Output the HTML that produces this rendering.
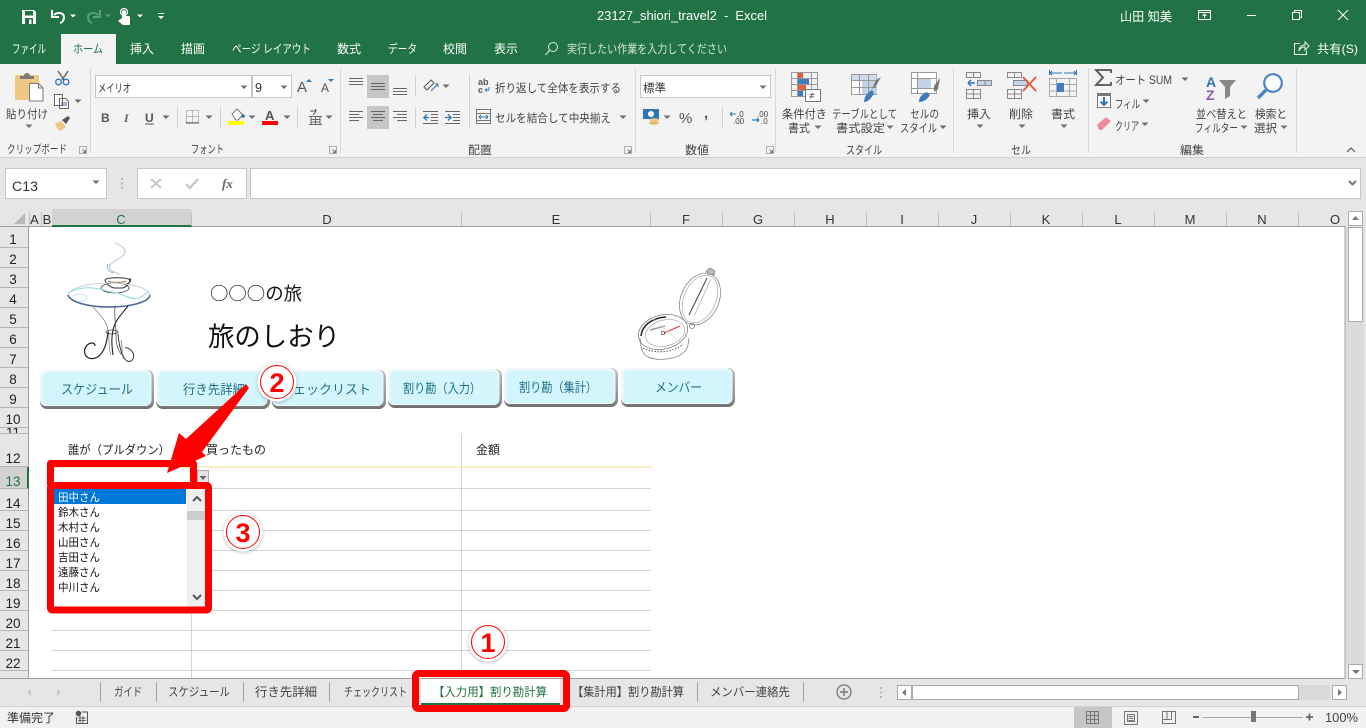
<!DOCTYPE html>
<html lang="ja"><head><meta charset="utf-8"><title>23127_shiori_travel2 - Excel</title>
<style>
html,body{margin:0;padding:0;width:1366px;height:728px;overflow:hidden;background:#e6e6e6}
svg{display:block;position:absolute;left:0;top:0}
text{font-family:"Liberation Sans","Noto Sans CJK JP",sans-serif;font-size:12px;fill:#444;white-space:pre}
.tab{fill:#fff;font-size:12px}
.r{font-size:11.5px;fill:#444}
.h{font-size:13px;fill:#333;text-anchor:middle}
.n{font-size:13.5px;fill:#222;text-anchor:middle}
.b{font-size:13px;fill:#21708a}
.s{font-size:12px;fill:#444}
.c{font-size:12px;fill:#222}
.l{font-size:11px;fill:#111}
.g{stroke:#d4d4d4;stroke-width:1;fill:none}
</style></head><body>
<svg width="1366" height="728" viewBox="0 0 1366 728" xmlns="http://www.w3.org/2000/svg">
<defs>
<path id="dd" d="M-3.5-1.5h7L0 2z" fill="#6e6e6e"/>
<path id="wd" d="M-3-1.5h6L0 1.5z" fill="#fff"/>
<g id="lc"><path d="M0 0h7v7H0z" fill="none" stroke="#9a9a9a" stroke-width=".8"/><path d="M3 3l3 3M6 3.5V6H3.500" fill="none" stroke="#777"/></g>
<linearGradient id="bs" x1="0" y1="0" x2="0" y2="1"><stop offset="0" stop-color="#bcbcbc"/><stop offset=".85" stop-color="#8c8c8c"/><stop offset="1" stop-color="#6d6d6d"/></linearGradient>
<g id="btn"><rect x="0" y="0" width="114" height="39" rx="7" fill="url(#bs)"/><rect x="0" y="0" width="111.500" height="36" rx="6" fill="#eef8fa"/><rect x="2.500" y="2.500" width="108" height="32.500" rx="5" fill="#d3f6fd"/></g>
<filter id="sh" x="-30%" y="-30%" width="160%" height="160%"><feGaussianBlur stdDeviation="1.5"/></filter>
</defs>

<!-- title bar -->
<rect width="1366" height="64" fill="#217346"/>
<rect x="61" y="34" width="55" height="30" fill="#f3f3f3"/>
<!-- QAT -->
<path d="M22 10h12l2 2v12H22z" fill="#fff"/><rect x="25" y="11" width="8" height="4.500" fill="#217346"/><rect x="25" y="18" width="8" height="6" fill="#217346"/><rect x="29" y="19.500" width="2.500" height="4.500" fill="#fff"/>
<path d="M54 15c3-3 10-3 10 2.500 0 3-2 5-4 5.500" fill="none" stroke="#fff" stroke-width="2"/><path d="M52 10v7h7" fill="none" stroke="#fff" stroke-width="2"/>
<use href="#wd" x="73" y="16"/>
<path d="M98 15c-3-3-10-3-10 2.500 0 3 2 5 4 5.500" fill="none" stroke="#5f9c7e" stroke-width="2"/><path d="M100 10v7h-7" fill="none" stroke="#5f9c7e" stroke-width="2"/>
<path d="M105 14.500h6l-3 3z" fill="#5f9c7e"/>
<path d="M122 18v-6c0-2.500 4-2.500 4 0v4h2c2 0 2 1 2 3v6h-7l-5-4z" fill="#fff"/><circle cx="124" cy="12" r="3.500" fill="none" stroke="#fff" stroke-width="1.200"/>
<use href="#wd" x="140" y="16"/>
<path d="M158 13h6v1h-6z" fill="#fff"/><path d="M158 16h6l-3 3z" fill="#fff"/>
<text x="597" y="20" textLength="170" lengthAdjust="spacingAndGlyphs" style="font-size:12.500px;fill:#fff">23127_shiori_travel2  -  Excel</text>
<text x="1120" y="21" textLength="52" lengthAdjust="spacingAndGlyphs" style="font-size:12.500px;fill:#fff">山田 知美</text>
<path d="M1198.500 10.500h12v9h-12zM1198.500 12.500h12M1204.500 18v-4M1202.500 16l2-2 2 2" fill="none" stroke="#fff"/>
<path d="M1247 15.500h9" stroke="#fff" fill="none"/>
<path d="M1292.500 12.500h7v7h-7zM1294.500 12.500v-2h7v7h-2" fill="none" stroke="#fff"/>
<path d="M1338 10l10 10M1348 10l-10 10" stroke="#fff" fill="none"/>
<!-- tabs -->
<text class="tab" x="12" y="53" textLength="34" lengthAdjust="spacingAndGlyphs">ファイル</text>
<text class="tab" x="73" y="53" textLength="30" lengthAdjust="spacingAndGlyphs" style="fill:#217346">ホーム</text>
<text class="tab" x="130" y="53" textLength="24" lengthAdjust="spacingAndGlyphs">挿入</text>
<text class="tab" x="181" y="53" textLength="24" lengthAdjust="spacingAndGlyphs">描画</text>
<text class="tab" x="232" y="53" textLength="79" lengthAdjust="spacingAndGlyphs">ページ レイアウト</text>
<text class="tab" x="337" y="53" textLength="24" lengthAdjust="spacingAndGlyphs">数式</text>
<text class="tab" x="388" y="53" textLength="29" lengthAdjust="spacingAndGlyphs">データ</text>
<text class="tab" x="443" y="53" textLength="24" lengthAdjust="spacingAndGlyphs">校閲</text>
<text class="tab" x="494" y="53" textLength="24" lengthAdjust="spacingAndGlyphs">表示</text>
<circle cx="553" cy="47" r="4.500" fill="none" stroke="#e3ece7"/><path d="M549.500 50.500l-4 4.500" stroke="#e3ece7" fill="none"/>
<text class="tab" x="567" y="53" textLength="160" lengthAdjust="spacingAndGlyphs" style="fill:#d5e4dc">実行したい作業を入力してください</text>
<path d="M1300 43.500h-5.500v11h12v-4M1299 51c0-4 3-6 6-6v-3l4 4-4 4v-3c-3 0-5 1-6 4z" fill="none" stroke="#e8f0ec"/>
<text class="tab" x="1317" y="53" textLength="41" lengthAdjust="spacingAndGlyphs">共有(S)</text>

<!-- ribbon -->
<rect y="64" width="1366" height="93" fill="#f3f3f3"/>
<rect y="157" width="1366" height="1" fill="#d2d2d2"/>
<g fill="#d8d8d8"><rect x="90" y="68" width="1" height="85"/><rect x="340" y="68" width="1" height="85"/><rect x="635" y="68" width="1" height="85"/><rect x="775" y="68" width="1" height="85"/><rect x="953" y="68" width="1" height="85"/><rect x="1088" y="68" width="1" height="85"/><rect x="1296" y="68" width="1" height="85"/></g>
<!-- clipboard -->
<rect x="15" y="75" width="24" height="25" rx="1" fill="#efc983"/><path d="M20 79v-3h4c0-4 6-4 6 0h4v3z" fill="#7b7b7b"/>
<path d="M29.500 83.500h9l4.500 4.500v13H29.500z" fill="#fff" stroke="#777"/><path d="M38.500 83.500v4.500H43" fill="none" stroke="#777"/>
<text class="r" x="6" y="118" textLength="42" lengthAdjust="spacingAndGlyphs">貼り付け</text><use href="#dd" x="29" y="126"/>
<path d="M58 71l6 9M68 71l-6 9" stroke="#6a6a6a" stroke-width="1.500" fill="none"/><circle cx="58.500" cy="82" r="2.800" fill="none" stroke="#2f75b5" stroke-width="1.300"/><circle cx="66" cy="82" r="2.800" fill="none" stroke="#2f75b5" stroke-width="1.300"/>
<path d="M54.500 94.500h8l0 11h-8zM59.500 98.500h6l3 3v7h-9z" fill="#fff" stroke="#666"/><path d="M61 103h6M61 105h6" stroke="#2f75b5"/>
<use href="#dd" x="78" y="101"/>
<path d="M55 124l6-3 5 6-6 4c-2-1-4-4-5-7z" fill="#efc983"/><path d="M62 120l6-4 2 2-4 6z" fill="#555"/>
<text class="r" x="7" y="153" textLength="60" lengthAdjust="spacingAndGlyphs">クリップボード</text><use href="#lc" x="79.500" y="146.500"/>
<!-- font -->
<rect x="95.500" y="75.500" width="156" height="22" fill="#fff" stroke="#c6c6c6"/>
<rect x="252.500" y="75.500" width="39" height="22" fill="#fff" stroke="#c6c6c6"/>
<text x="98" y="92" textLength="33" lengthAdjust="spacingAndGlyphs" style="font-size:11.500px;fill:#333">メイリオ</text>
<text x="255" y="92" style="font-size:12.500px;fill:#333">9</text>
<use href="#dd" x="244" y="87"/><use href="#dd" x="284" y="87"/>
<text x="297" y="92" style="font-size:15px;fill:#555">A</text><path d="M306 82h6l-3-3z" fill="#2f75b5"/>
<text x="321" y="92" style="font-size:12px;fill:#555">A</text><path d="M328 79h6l-3 3z" fill="#2f75b5"/>
<text x="101" y="122" style="font-size:12px;font-weight:bold;fill:#555">B</text>
<text x="124" y="122" style="font-size:12px;font-style:italic;font-weight:bold;fill:#666;font-family:'Liberation Serif',serif">I</text>
<text x="145" y="122" style="font-size:12px;font-weight:bold;fill:#555">U</text><rect x="145" y="123.500" width="9" height="1" fill="#555"/>
<use href="#dd" x="166" y="117"/>
<rect x="177" y="107" width="1" height="21" fill="#d0d0d0"/>
<path d="M186.500 110.500h12v12h-12zM192.500 110.500v12M186.500 116.500h12" fill="none" stroke="#888" stroke-dasharray="1 1"/><path d="M186 123h13" stroke="#555"/>
<use href="#dd" x="209" y="117"/>
<rect x="220" y="107" width="1" height="21" fill="#d0d0d0"/>
<path d="M232 114l5-5 6 6-5 5h-2z" fill="#fff" stroke="#777"/><circle cx="243" cy="116" r="1.800" fill="#2f75b5"/>
<rect x="228" y="121" width="16" height="4" fill="#ffff00"/>
<use href="#dd" x="252" y="117"/>
<text x="265" y="120" style="font-size:13px;font-weight:bold;fill:#555">A</text>
<rect x="262" y="121" width="16" height="4" fill="#ff0000"/>
<use href="#dd" x="287" y="117"/>
<rect x="297" y="107" width="1" height="21" fill="#d0d0d0"/>
<path d="M310 111h6l-3 4M316 109l-1 2" fill="none" stroke="#555"/>
<path d="M309 116.500h13M311 119.500h9M311 122h9M309 124.500h13M315.500 116v8.500M311 116.500v8M320 116.500v8" fill="none" stroke="#666"/>
<use href="#dd" x="329" y="117"/>
<text class="r" x="191" y="153" textLength="33" lengthAdjust="spacingAndGlyphs">フォント</text><use href="#lc" x="329.500" y="146.500"/>
<!-- alignment -->
<rect x="367" y="75" width="22" height="23" fill="#c6c6c6"/><rect x="367" y="106" width="22" height="23" fill="#c6c6c6"/>
<path d="M349 78.500h14M349 81.500h14M349 84.500h14M371 83.500h14M371 86.500h14M371 89.500h14M393 88.500h14M393 91.500h14M393 94.500h14" stroke="#666" fill="none"/>
<path d="M349 111.500h14M349 114.500h10M349 117.500h14M349 120.500h10M371 111.500h14M373 114.500h10M371 117.500h14M373 120.500h10M393 111.500h14M397 114.500h10M393 117.500h14M397 120.500h10" stroke="#666" fill="none"/>
<rect x="415" y="75" width="1" height="21" fill="#d0d0d0"/><rect x="415" y="107" width="1" height="21" fill="#d0d0d0"/>
<path d="M424 87l7-7 3 3-7 7z" fill="none" stroke="#555"/><path d="M431 91l7-7M438 84h-3M438 84v3" stroke="#2f75b5" fill="none"/>
<use href="#dd" x="446" y="86"/>
<path d="M423 111.500h15M431 114.500h7M431 117.500h7M431 120.500h7M423 123.500h15M445 111.500h15M445 123.500h15M453 114.500h7M453 117.500h7M453 120.500h7" stroke="#666" fill="none"/>
<path d="M429 117.500h-5l3-3M424 117.500l3 3M445 117.500h6l-3-3M451 117.500l-3 3" stroke="#2f75b5" stroke-width="1.300" fill="none"/>
<rect x="469" y="74" width="1" height="55" fill="#d0d0d0"/>
<text x="478" y="85" style="font-size:9px;font-weight:bold;fill:#555">ab</text><text x="478" y="93" style="font-size:9px;font-weight:bold;fill:#555">c</text><path d="M489 87v3h-4M485 90l2-1.500M485 90l2 1.500" stroke="#2f75b5" fill="none"/>
<text class="r" x="495" y="92" textLength="126" lengthAdjust="spacingAndGlyphs">折り返して全体を表示する</text>
<path d="M476.500 109.500h14v14h-14zM476.500 113.500h14M476.500 120.500h14" fill="none" stroke="#777"/><path d="M479 117h9M479 117l2-2M479 117l2 2M488 117l-2-2M488 117l-2 2" stroke="#2f75b5" fill="none"/>
<text class="r" x="495" y="122" textLength="116" lengthAdjust="spacingAndGlyphs">セルを結合して中央揃え</text><use href="#dd" x="623" y="117"/>
<text class="r" x="468" y="154" textLength="24" lengthAdjust="spacingAndGlyphs">配置</text><use href="#lc" x="624.500" y="146.500"/>
<!-- number -->
<rect x="640.500" y="75.500" width="130" height="22" fill="#fff" stroke="#c6c6c6"/>
<text x="643" y="92" textLength="23" lengthAdjust="spacingAndGlyphs" style="font-size:11.500px;fill:#333">標準</text><use href="#dd" x="763" y="87"/>
<rect x="643" y="109" width="16" height="10" fill="#2f75b5"/><circle cx="651" cy="114" r="3" fill="#fff"/><ellipse cx="654" cy="120" rx="5" ry="1.800" fill="#efc983"/><ellipse cx="654" cy="123" rx="5" ry="1.800" fill="#e5b66b"/><use href="#dd" x="667" y="117"/>
<text x="679" y="123" style="font-size:15px;fill:#555">%</text>
<text x="704" y="118" style="font-size:15px;font-weight:bold;fill:#555">,</text>
<rect x="722" y="107" width="1" height="21" fill="#d0d0d0"/>
<text x="737" y="117" style="font-size:8px;fill:#444">.0</text><text x="733" y="124" style="font-size:8px;fill:#444">.00</text><path d="M736 114h-6M730 114l2-2M730 114l2 2" stroke="#2f75b5" fill="none"/>
<text x="757" y="117" style="font-size:8px;fill:#444">.00</text><text x="761" y="124" style="font-size:8px;fill:#444">.0</text><path d="M752 120h7M759 120l-2-2M759 120l-2 2" stroke="#2f75b5" stroke-width="1.200" fill="none"/>
<text class="r" x="685" y="154" textLength="24" lengthAdjust="spacingAndGlyphs">数値</text><use href="#lc" x="766.500" y="146.500"/>
<!-- styles -->
<path d="M791.500 72.500h26v24h-26zM791.500 78.500h26M791.500 84.500h26M791.500 90.500h26M797.500 72.500v24M811.500 72.500v24" fill="none" stroke="#9a9a9a"/>
<rect x="798" y="73" width="5" height="5" fill="#dc6141"/><rect x="798" y="79" width="11" height="5" fill="#3f7cbf"/><rect x="798" y="85" width="8" height="5" fill="#dc6141"/><rect x="798" y="91" width="5" height="5" fill="#3f7cbf"/>
<rect x="805.500" y="89.500" width="15" height="12" fill="#fff" stroke="#777"/><text x="809" y="99" style="font-size:10px;fill:#444">≠</text>
<text class="r" x="782" y="118" textLength="45" lengthAdjust="spacingAndGlyphs">条件付き</text><text class="r" x="788" y="132" textLength="22" lengthAdjust="spacingAndGlyphs">書式</text><use href="#dd" x="818" y="127"/>
<rect x="851.500" y="74.500" width="25" height="20" fill="#fff" stroke="#9a9a9a"/><rect x="852" y="75" width="25" height="5" fill="#b9cde5" opacity=".7"/><rect x="862" y="80" width="15" height="14" fill="#c3d4e8"/>
<path d="M851.500 80.500h25M851.500 87.500h25M859.500 74.500v20M868.500 74.500v20" stroke="#9a9a9a" fill="none"/>
<path d="M876 80l5-3-5 9-4 3z" fill="#777"/><path d="M864 102c0-5 3-9 8-12l2 3c-2 5-6 9-10 9z" fill="#3f7cbf"/>
<text class="r" x="832" y="118" textLength="65" lengthAdjust="spacingAndGlyphs">テーブルとして</text><text class="r" x="836" y="132" textLength="49" lengthAdjust="spacingAndGlyphs">書式設定</text><use href="#dd" x="890" y="127"/>
<rect x="911.500" y="72.500" width="25" height="21" fill="#fff" stroke="#9a9a9a"/><rect x="917" y="78" width="14" height="10" fill="#c3d4e8"/>
<path d="M911.500 78.500h25M911.500 88.500h25M917.500 72.500v21" stroke="#9a9a9a" fill="none"/>
<path d="M934 86l6-8-2 11-4 3z" fill="#777"/><path d="M919 102c0-5 3-8 8-10l3 3c-3 5-7 7-11 7z" fill="#3f7cbf"/>
<text class="r" x="910" y="118" textLength="29" lengthAdjust="spacingAndGlyphs">セルの</text><text class="r" x="900" y="132" textLength="37" lengthAdjust="spacingAndGlyphs">スタイル</text><use href="#dd" x="943" y="127"/>
<text class="r" x="846" y="154" textLength="36" lengthAdjust="spacingAndGlyphs">スタイル</text>
<!-- cells -->
<path d="M966.500 72.500h14v5h-14zM973.500 72.500v5M966.500 89.500h14v9h-14zM973.500 89.500v9M966.500 94h14" fill="none" stroke="#888"/><rect x="977.500" y="80.500" width="14" height="5" fill="#c3d4e8" stroke="#888"/><path d="M985 81v5" stroke="#888"/><path d="M975 83h-7M968 83l3-3M968 83l3 3" stroke="#2f75b5" stroke-width="1.500" fill="none"/>
<text class="r" x="967" y="118" textLength="24" lengthAdjust="spacingAndGlyphs">挿入</text><use href="#dd" x="980" y="126"/>
<path d="M1007.500 72.500h14v5h-14zM1014.500 72.500v5M1007.500 89.500h14v9h-14zM1014.500 89.500v9M1007.500 94h14" fill="none" stroke="#888"/><rect x="1013.500" y="80.500" width="14" height="5" fill="#c3d4e8" stroke="#888"/>
<path d="M1023 77l13 14M1036 77l-13 14" stroke="#dc6141" stroke-width="2" fill="none"/>
<text class="r" x="1009" y="118" textLength="24" lengthAdjust="spacingAndGlyphs">削除</text><use href="#dd" x="1022" y="126"/>
<path d="M1049.500 78.500h27v18h-27zM1049.500 84.500h27M1049.500 91h27M1056.500 78.500v18M1069.500 78.500v18" stroke="#aaa" fill="none"/><rect x="1057" y="83" width="7" height="9" fill="#3f7cbf"/>
<path d="M1050 73h12M1050 73l2-2M1050 73l2 2M1076 73h-12M1076 73l-2-2M1076 73l-2 2M1049.500 70v5M1076.500 70v5" stroke="#2f75b5" fill="none"/>
<text class="r" x="1051" y="118" textLength="24" lengthAdjust="spacingAndGlyphs">書式</text><use href="#dd" x="1064" y="126"/>
<text class="r" x="1011" y="154" textLength="20" lengthAdjust="spacingAndGlyphs">セル</text>
<!-- editing -->
<path d="M1111 73v-3h-15l7 7.500-7 7.500h15v-3" fill="none" stroke="#555" stroke-width="1.800"/>
<text class="r" x="1115" y="84" textLength="57" lengthAdjust="spacingAndGlyphs">オート SUM</text><use href="#dd" x="1185" y="79"/>
<rect x="1097.500" y="93.500" width="13" height="14" fill="#fff" stroke="#777"/><rect x="1097" y="93" width="14" height="3" fill="#777"/><path d="M1104 97v8M1100.500 101.500l3.500 3.500 3.500-3.500" stroke="#2f75b5" stroke-width="2" fill="none"/>
<text class="r" x="1115" y="108" textLength="25" lengthAdjust="spacingAndGlyphs">フィル</text><use href="#dd" x="1146" y="101"/>
<path d="M1097 125l9-8 5 4-9 9h-3z" fill="#eb8c99"/><text class="r" x="1115" y="130" textLength="24" lengthAdjust="spacingAndGlyphs">クリア</text><use href="#dd" x="1145" y="124"/>
<text x="1206" y="87" style="font-size:14px;font-weight:bold;fill:#2f75b5">A</text><text x="1206" y="100" style="font-size:14px;font-weight:bold;fill:#8e5cab">Z</text>
<path d="M1219 80h17l-6 7v9l-5 3V87z" fill="#888"/>
<text class="r" x="1196" y="118" textLength="51" lengthAdjust="spacingAndGlyphs">並べ替えと</text><text class="r" x="1195" y="132" textLength="43" lengthAdjust="spacingAndGlyphs">フィルター</text><use href="#dd" x="1244" y="127"/>
<circle cx="1273" cy="83" r="8.800" fill="#fff" stroke="#4a86c0" stroke-width="2.200"/><path d="M1266 90l-8 8" stroke="#4a86c0" stroke-width="3.400" fill="none"/>
<text class="r" x="1255" y="118" textLength="32" lengthAdjust="spacingAndGlyphs">検索と</text><text class="r" x="1254" y="132" textLength="23" lengthAdjust="spacingAndGlyphs">選択</text><use href="#dd" x="1284" y="127"/>
<text class="r" x="1180" y="154" textLength="24" lengthAdjust="spacingAndGlyphs">編集</text>
<path d="M1347 152l4-4 4 4" stroke="#777" stroke-width="1.500" fill="none"/>

<!-- formula bar -->
<rect x="5.500" y="168.500" width="101" height="30" fill="#fff" stroke="#c6c6c6"/>
<text x="12" y="191" textLength="26" lengthAdjust="spacingAndGlyphs" style="font-size:13.500px;fill:#333">C13</text>
<use href="#dd" x="96" y="182"/>
<path d="M122 178v2M122 182.500v2M122 187v2" stroke="#a8a8a8" stroke-width="1.500"/>
<rect x="137.500" y="168.500" width="109" height="30" fill="#fff" stroke="#c6c6c6"/>
<path d="M151 179l10 9M161 179l-10 9" stroke="#c8c8c8" stroke-width="2" fill="none"/>
<path d="M186 184l4 4 8-9" stroke="#c8c8c8" stroke-width="2.400" fill="none"/>
<text x="222" y="188" style="font-size:13px;font-style:italic;font-weight:bold;fill:#666;font-family:'Liberation Serif',serif">fx</text>
<rect x="250.500" y="168.500" width="1110" height="30" fill="#fff" stroke="#c6c6c6"/>
<path d="M1349 181l3.500 3.500 3.500-3.500" stroke="#777" stroke-width="2" fill="none"/>

<!-- sheet -->
<rect x="29" y="227" width="1316" height="451" fill="#fff"/>
<rect x="0" y="227" width="28" height="451" fill="#e6e6e6"/>
<rect x="52" y="209" width="139.500" height="18" fill="#d2d2d2"/>
<path d="M25 213v11H14z" fill="#b8b8b8"/>
<rect x="28" y="227" width="1" height="451" fill="#9f9f9f"/>
<rect x="0" y="226" width="1345" height="1" fill="#9f9f9f"/>
<rect x="1344.500" y="226" width="1" height="452" fill="#9f9f9f"/>
<rect x="0" y="678" width="1345" height="1" fill="#9f9f9f"/>
<rect x="52" y="225" width="140" height="2" fill="#217346"/>
<g fill="#c2c2c2"><rect x="29" y="212" width="1" height="14"/><rect x="41" y="212" width="1" height="14"/><rect x="191" y="212" width="1" height="14"/><rect x="461" y="212" width="1" height="14"/><rect x="650" y="212" width="1" height="14"/><rect x="722" y="212" width="1" height="14"/><rect x="794" y="212" width="1" height="14"/><rect x="866" y="212" width="1" height="14"/><rect x="938" y="212" width="1" height="14"/><rect x="1010" y="212" width="1" height="14"/><rect x="1082" y="212" width="1" height="14"/><rect x="1154" y="212" width="1" height="14"/><rect x="1226" y="212" width="1" height="14"/><rect x="1298" y="212" width="1" height="14"/></g>
<text class="h" x="34.500" y="224">A</text><text class="h" x="47" y="224">B</text><text class="h" x="121" y="224" style="fill:#217346">C</text><text class="h" x="327" y="224">D</text><text class="h" x="556" y="224">E</text><text class="h" x="686" y="224">F</text><text class="h" x="758" y="224">G</text><text class="h" x="830" y="224">H</text><text class="h" x="902" y="224">I</text><text class="h" x="974" y="224">J</text><text class="h" x="1046" y="224">K</text><text class="h" x="1118" y="224">L</text><text class="h" x="1190" y="224">M</text><text class="h" x="1262" y="224">N</text><text class="h" x="1335" y="224">O</text>
<!-- row headers -->
<rect x="0" y="467" width="27" height="22" fill="#d2d2d2"/><rect x="27" y="467" width="2" height="22" fill="#217346"/>
<path d="M0 247.500h28M0 267.500h28M0 287.500h28M0 307.500h28M0 327.500h28M0 347.500h28M0 367.500h28M0 387.500h28M0 407.500h28M0 427.500h28M0 433.500h28M0 466.500h28M0 488.500h28M0 510.500h28M0 530.500h28M0 550.500h28M0 570.500h28M0 590.500h28M0 610.500h28M0 630.500h28M0 650.500h28M0 670.500h28" stroke="#b5b5b5" fill="none"/>
<text class="n" x="13" y="244">1</text><text class="n" x="13" y="264">2</text><text class="n" x="13" y="284">3</text><text class="n" x="13" y="304">4</text><text class="n" x="13" y="324">5</text><text class="n" x="13" y="344">6</text><text class="n" x="13" y="364">7</text><text class="n" x="13" y="384">8</text><text class="n" x="13" y="404">9</text><text class="n" x="13" y="424">10</text>
<svg x="0" y="428" width="28" height="5"><text class="n" x="13" y="9">11</text></svg>
<text class="n" x="13" y="463">12</text><text class="n" x="13" y="486" style="fill:#217346">13</text><text class="n" x="13" y="508">14</text><text class="n" x="13" y="528">15</text><text class="n" x="13" y="548">16</text><text class="n" x="13" y="568">17</text><text class="n" x="13" y="588">18</text><text class="n" x="13" y="608">19</text><text class="n" x="13" y="628">20</text><text class="n" x="13" y="648">21</text><text class="n" x="13" y="668">22</text>
<!-- table lines -->
<path class="g" d="M52 488.500h599M52 510.500h599M52 530.500h599M52 550.500h599M52 570.500h599M52 590.500h599M52 610.500h599M52 630.500h599M52 650.500h599M52 670.500h599M191.500 434v244M461.500 434v244"/>
<rect x="52" y="466" width="599" height="2" fill="#fdeecb"/>
<text x="210" y="300" textLength="92" lengthAdjust="spacingAndGlyphs" style="font-size:18px;fill:#111;font-family:'Noto Sans CJK JP',sans-serif">○○○の旅</text>
<text x="208" y="346" textLength="132" lengthAdjust="spacingAndGlyphs" style="font-size:26.500px;fill:#111">旅のしおり</text>
<text class="c" x="68" y="454" textLength="102" lengthAdjust="spacingAndGlyphs">誰が（プルダウン）</text>
<text class="c" x="206" y="454" textLength="60" lengthAdjust="spacingAndGlyphs">買ったもの</text>
<text class="c" x="476" y="454" textLength="24" lengthAdjust="spacingAndGlyphs">金額</text>

<!-- coffee table -->
<g fill="none">
<path d="M115 243c5 2 11 5 10 10-2 5-11 7-15 12-2 5 3 7 7 8 3 1 2 2 1 2" stroke="#c3cfe4" stroke-width="1.200"/>
<path d="M108 264c-2 4 0 8 6 9" stroke="#a9b9d6"/>
<path d="M105 280c2-3 22-3 25 0-1 5-5 8-8 8h-8c-4-1-8-4-9-8z" stroke="#333"/><path d="M108 281c4 2 14 2 18 0" stroke="#b88d6e" stroke-width="1.500"/><path d="M129 279c3-1 2 4-3 5" stroke="#333"/>
<ellipse cx="115" cy="288" rx="14" ry="5" stroke="#444" stroke-width=".8"/>
<path d="M68 295c2-7 20-12 41-12 22 0 40 5 41 12" stroke="#c6d0dd"/>
<path d="M68 295c2 7 20 12 41 12 22 0 40-5 41-12" stroke="#4d6599" stroke-width="1.500"/>
<path d="M68 293c7-4 17-6 25-5 9 1 16 4 24 5 8 2 12 7 22 5 4-1 6-5 10-6" stroke="#8fdde0" stroke-width="1.100"/>
<path d="M72 297c4-4 15-3 15 1s-8 4-10 3" stroke="#c7e9ec"/>
<path d="M93 307c5 6 13 12 15 23 2 9 0 18 3 25" stroke="#888" stroke-width=".8"/>
<path d="M128 306c-6 8-13 14-15 24-2 9-1 17 0 25" stroke="#222" stroke-width="1.100"/>
<path d="M115 306c-1 10 1 20 1 30 0 10 3 18 8 20" stroke="#555" stroke-width=".8"/>
<ellipse cx="112" cy="332" rx="6" ry="2" stroke="#444" stroke-width=".8"/>
<path d="M108 332c-1 10-3 18-8 23-4 4-12 6-15-1-2-6 3-11 7-11 2 0 3 1 3 3" stroke="#222" stroke-width="1.200"/>
<path d="M118 334c1 10 3 23 9 27 5 2 8-4 6-8-2-4-6-6-8-5" stroke="#333"/>
<path d="M121 340c2 6 0 16 3 19" stroke="#777" stroke-width=".8"/>
</g>
<!-- compass -->
<g fill="none" stroke="#777" stroke-width=".7">
<ellipse cx="700" cy="299" rx="19" ry="27" transform="rotate(24 700 299)"/><ellipse cx="700" cy="299" rx="16" ry="25" transform="rotate(24 700 299)" stroke="#aaa"/>
<path d="M707 278l-18 37" stroke="#444" stroke-width="1"/><path d="M711 279l-17 37" stroke="#aaa"/>
<path d="M706 271l4-3 5 3-1 4-6-1z" fill="#bbb"/>
<circle cx="692" cy="326" r="2.500"/>
<ellipse cx="663" cy="332" rx="25" ry="17" transform="rotate(-14 663 332)"/>
<path d="M641 336c1-10 10-18 25-19" stroke="#222" stroke-width="1.500"/>
<ellipse cx="665" cy="333" rx="20" ry="13" transform="rotate(-14 665 333)" stroke="#aaa"/>
<path d="M650 330l15-4" stroke="#999" stroke-width="1.500"/><path d="M664 333l16-7" stroke="#e23b3b" stroke-width="1"/><circle cx="663" cy="333" r="1.800" stroke="#333"/>
<path d="M640 338c1 8 1 15 8 19 9 4 28 3 36-5 5-4 4-10 5-14"/><path d="M643 348c12 6 30 5 40-4" stroke="#555" stroke-dasharray="1.500 1.500" stroke-width="1"/>
<path d="M650 316l30 26" stroke="#ddd"/>
</g>

<!-- buttons -->
<use href="#btn" x="40" y="370"/><use href="#btn" x="156" y="370"/><use href="#btn" x="272" y="370"/><use href="#btn" x="388" y="369"/><use href="#btn" x="504" y="368"/><use href="#btn" x="621" y="368"/>
<text class="b" x="61" y="394" textLength="72" lengthAdjust="spacingAndGlyphs">スケジュール</text>
<text class="b" x="183" y="394" textLength="62" lengthAdjust="spacingAndGlyphs">行き先詳細</text>
<text class="b" x="280" y="394" textLength="91" lengthAdjust="spacingAndGlyphs">チェックリスト</text>
<text class="b" x="403" y="393" textLength="78" lengthAdjust="spacingAndGlyphs">割り勘（入力）</text>
<text class="b" x="519" y="392" textLength="78" lengthAdjust="spacingAndGlyphs">割り勘（集計）</text>
<text class="b" x="655" y="392" textLength="47" lengthAdjust="spacingAndGlyphs">メンバー</text>

<!-- dropdown button -->
<rect x="197.500" y="470.500" width="11" height="13" fill="#e4e4e4" stroke="#adadad"/><path d="M199.500 476h7l-3.500 4z" fill="#666"/>
<!-- dropdown list -->
<rect x="54" y="489" width="151" height="118" fill="#fff"/>
<rect x="54" y="489" width="132" height="15" fill="#0078d7"/>
<rect x="187" y="489" width="18" height="118" fill="#f0f0f0"/><rect x="187" y="511" width="18" height="9" fill="#cdcdcd"/>
<path d="M193 501l4-4 4 4M193 595l4 4 4-4" stroke="#555" stroke-width="2" fill="none"/>
<text class="l" x="58" y="501" textLength="42" lengthAdjust="spacingAndGlyphs" style="fill:#fff">田中さん</text>
<text class="l" x="58" y="516" textLength="42" lengthAdjust="spacingAndGlyphs">鈴木さん</text>
<text class="l" x="58" y="531" textLength="42" lengthAdjust="spacingAndGlyphs">木村さん</text>
<text class="l" x="58" y="546" textLength="42" lengthAdjust="spacingAndGlyphs">山田さん</text>
<text class="l" x="58" y="561" textLength="42" lengthAdjust="spacingAndGlyphs">吉田さん</text>
<text class="l" x="58" y="576" textLength="42" lengthAdjust="spacingAndGlyphs">遠藤さん</text>
<text class="l" x="58" y="591" textLength="42" lengthAdjust="spacingAndGlyphs">中川さん</text>

<!-- vertical scrollbar -->
<rect x="1346" y="227" width="18" height="437" fill="#dbdbdb"/>
<rect x="1348.500" y="211.500" width="14" height="14" fill="#fff" stroke="#ababab"/><path d="M1352 220h7l-3.500-4z" fill="#777"/>
<rect x="1348.500" y="227.500" width="14" height="94" fill="#fff" stroke="#ababab"/>
<rect x="1348.500" y="664.500" width="14" height="14" fill="#fff" stroke="#ababab"/><path d="M1352 670h8l-4 4z" fill="#777"/>

<!-- sheet tabs -->
<rect y="679" width="1366" height="27" fill="#e6e6e6"/>
<path d="M31 689v7l-4-3.500zM57 689v7l4-3.500z" fill="#c4c4c4"/>
<g fill="#a0a0a0"><rect x="100" y="682" width="1" height="20"/><rect x="156" y="682" width="1" height="20"/><rect x="243" y="682" width="1" height="20"/><rect x="329" y="682" width="1" height="20"/><rect x="697" y="682" width="1" height="20"/><rect x="803" y="682" width="1" height="20"/></g>
<text class="s" x="114" y="696" textLength="28" lengthAdjust="spacingAndGlyphs">ガイド</text>
<text class="s" x="168" y="696" textLength="62" lengthAdjust="spacingAndGlyphs">スケジュール</text>
<text class="s" x="255" y="696" textLength="62" lengthAdjust="spacingAndGlyphs">行き先詳細</text>
<text class="s" x="344" y="696" textLength="63" lengthAdjust="spacingAndGlyphs">チェックリスト</text>
<rect x="421" y="679" width="139" height="24" fill="#fff"/><rect x="421" y="703" width="139" height="2" fill="#217346"/>
<text class="s" x="433" y="696" textLength="114" lengthAdjust="spacingAndGlyphs" style="fill:#217346">【入力用】割り勘計算</text>
<text class="s" x="572" y="696" textLength="112" lengthAdjust="spacingAndGlyphs">【集計用】割り勘計算</text>
<text class="s" x="710" y="696" textLength="80" lengthAdjust="spacingAndGlyphs">メンバー連絡先</text>
<circle cx="844" cy="692" r="7" fill="none" stroke="#777" stroke-width="1.300"/><path d="M840 692h8M844 688v8" stroke="#777" stroke-width="1.400"/>
<path d="M881 687v2M881 691.500v2M881 696v2" stroke="#a8a8a8" stroke-width="1.500"/>
<rect x="912" y="685" width="418" height="15" fill="#d9d9d9"/>
<rect x="897.500" y="685.500" width="14" height="14" fill="#fff" stroke="#ababab"/><path d="M906 689v7l-4-3.500z" fill="#777"/>
<rect x="912.500" y="685.500" width="386" height="14" fill="#fff" stroke="#ababab"/>
<rect x="1332.500" y="685.500" width="14" height="14" fill="#fff" stroke="#ababab"/><path d="M1338 689v7l4-3.500z" fill="#777"/>

<!-- status -->
<rect y="706" width="1366" height="22" fill="#f1f1f1"/><rect y="706" width="1366" height="1" fill="#d2d2d2"/>
<text x="7" y="722" textLength="48" lengthAdjust="spacingAndGlyphs" style="font-size:12px;fill:#333">準備完了</text>
<circle cx="78.500" cy="713.500" r="2.800" fill="#555"/><path d="M82 712h5.500v11.500h-11V717" fill="none" stroke="#555"/><path d="M78 718h8M78 720.500h8M80 716v7M83 716v7" stroke="#666"/>
<rect x="1074" y="707" width="38" height="21" fill="#c6c6c6"/>
<path d="M1086.500 711.500h12v12h-12zM1086.500 715.500h12M1086.500 719.500h12M1090.500 711.500v12M1094.500 711.500v12" stroke="#777" fill="none"/>
<path d="M1124.500 711.500h13v13h-13zM1127.500 714.500h7v7h-7zM1128.500 716.500h5M1128.500 718.500h5M1128.500 720.500h5" stroke="#777" fill="none"/>
<path d="M1162.500 711.500h13v12h-13zM1162.500 719.500h9v-8M1167 711.500v8" stroke="#777" fill="none"/>
<rect x="1193" y="716" width="6" height="2" fill="#666"/>
<rect x="1203" y="717" width="100" height="1" fill="#a8a8a8"/>
<rect x="1251" y="711" width="5" height="11" fill="#777"/>
<path d="M1306 717h7M1309.500 713.500v7" stroke="#666" stroke-width="1.800"/>
<text x="1325" y="722" textLength="33" lengthAdjust="spacingAndGlyphs" style="font-size:12.500px;fill:#444">100%</text>

<!-- annotations -->
<g fill="none" stroke="#ff0000" stroke-width="7" stroke-linejoin="round">
<path d="M193.500 485V463.500H50.500V485"/>
<rect x="50.500" y="485.500" width="158" height="124.500" rx="2"/>
<rect x="415.500" y="673.500" width="151" height="35" rx="3"/>
</g>
<polygon points="246,384 249,388 202,452 206,456 167,473 179,433 186,439" fill="#ff0000"/>
<g>
<circle cx="277" cy="383" r="20" fill="#000" opacity=".2" filter="url(#sh)"/><circle cx="277" cy="382" r="19.500" fill="#fff"/><circle cx="277" cy="382" r="16.500" fill="#fff" stroke="#ff0000" stroke-width="1"/>
<text x="277" y="392" text-anchor="middle" style="font-size:27px;font-weight:bold;fill:#ff0000">2</text>
<circle cx="243" cy="533" r="20" fill="#000" opacity=".2" filter="url(#sh)"/><circle cx="243" cy="532" r="19.500" fill="#fff"/><circle cx="243" cy="532" r="16.500" fill="#fff" stroke="#ff0000" stroke-width="1"/>
<text x="243" y="542" text-anchor="middle" style="font-size:27px;font-weight:bold;fill:#ff0000">3</text>
<circle cx="488" cy="643" r="20" fill="#000" opacity=".2" filter="url(#sh)"/><circle cx="488" cy="642" r="19.500" fill="#fff"/><circle cx="488" cy="642" r="16.500" fill="#fff" stroke="#ff0000" stroke-width="1"/>
<text x="488" y="652" text-anchor="middle" style="font-size:27px;font-weight:bold;fill:#ff0000">1</text>
</g>
</svg>
</body></html>
